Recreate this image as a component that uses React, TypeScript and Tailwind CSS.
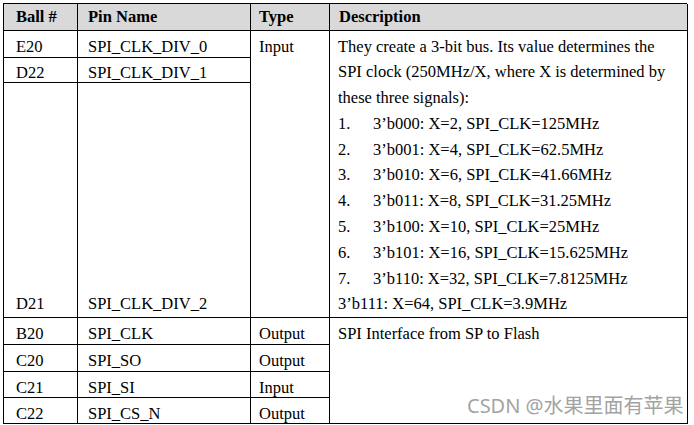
import React from 'react'

const cell = 'border-b border-r border-black'

const options = [
  "3’b000: X=2, SPI_CLK=125MHz",
  "3’b001: X=4, SPI_CLK=62.5MHz",
  "3’b010: X=6, SPI_CLK=41.66MHz",
  "3’b011: X=8, SPI_CLK=31.25MHz",
  "3’b100: X=10, SPI_CLK=25MHz",
  "3’b101: X=16, SPI_CLK=15.625MHz",
  "3’b110: X=32, SPI_CLK=7.8125MHz",
]

const bottomRows = [
  { ball: 'C20', pin: 'SPI_SO', type: 'Output' },
  { ball: 'C21', pin: 'SPI_SI', type: 'Input' },
  { ball: 'C22', pin: 'SPI_CS_N', type: 'Output' },
]

const App = () => {
  return (
    <div className="relative h-[425px] w-[694px] overflow-hidden bg-white pl-[3px] pt-[3px] font-['Liberation_Serif',serif] text-[16.5px] leading-[25.8px] text-black">
      <div className="grid w-[684px] grid-cols-[74px_173px_79px_358px] grid-rows-[26.5px_27px_25.5px_235px_27px_27px_26px_26px] border-l border-t border-black">
        {/* Header */}
        <div className={`${cell} flex items-center bg-[#d9d9d9] pl-[12px] font-bold`}>Ball #</div>
        <div className={`${cell} flex items-center bg-[#d9d9d9] pl-[10px] font-bold`}>Pin Name</div>
        <div className={`${cell} flex items-center bg-[#d9d9d9] pl-[8px] font-bold`}>Type</div>
        <div className={`${cell} flex items-center bg-[#d9d9d9] pl-[9px] font-bold`}>Description</div>

        {/* SPI_CLK_DIV group */}
        <div className={`${cell} pl-[12px] pt-[3px]`}>E20</div>
        <div className={`${cell} pl-[10px] pt-[3px]`}>SPI_CLK_DIV_0</div>
        <div className={`${cell} row-span-3 pl-[8px] pt-[3px]`}>Input</div>
        <div className={`${cell} row-span-3 flex flex-col whitespace-nowrap pl-[8px] pt-[3px]`}>
          <span>They create a 3-bit bus. Its value determines the</span>
          <span>SPI clock (250MHz/X, where X is determined by</span>
          <span>these three signals):</span>
          {options.map((o, i) => (
            <span key={o} className="flex">
              <span className="w-[35px]">{i + 1}.</span>
              <span>{o}</span>
            </span>
          ))}
          <span>3’b111: X=64, SPI_CLK=3.9MHz</span>
        </div>
        <div className={`${cell} pl-[12px] pt-[2px]`}>D22</div>
        <div className={`${cell} pl-[10px] pt-[2px]`}>SPI_CLK_DIV_1</div>
        <div className={`${cell} flex items-end pl-[12px]`}>D21</div>
        <div className={`${cell} flex items-end pl-[10px]`}>SPI_CLK_DIV_2</div>

        {/* SPI interface group */}
        <div className={`${cell} pl-[12px] pt-[3px]`}>B20</div>
        <div className={`${cell} pl-[10px] pt-[3px]`}>SPI_CLK</div>
        <div className={`${cell} pl-[8px] pt-[3px]`}>Output</div>
        <div className={`${cell} row-span-5 pl-[8px] pt-[3px]`}>SPI Interface from SP to Flash</div>
        {bottomRows.map((r) => (
          <React.Fragment key={r.ball}>
            <div className={`${cell} pl-[12px] pt-[3px]`}>{r.ball}</div>
            <div className={`${cell} pl-[10px] pt-[3px]`}>{r.pin}</div>
            <div className={`${cell} pl-[8px] pt-[3px]`}>{r.type}</div>
          </React.Fragment>
        ))}
      </div>

      {/* Watermark */}
      <div className="absolute left-[467px] top-[392px] font-['Noto_Sans','Noto_Sans_CJK_SC',sans-serif] text-[20px] leading-[28px] text-[#a3a3a3]">
        CSDN @水果里面有苹果
      </div>
    </div>
  )
}

export default App
